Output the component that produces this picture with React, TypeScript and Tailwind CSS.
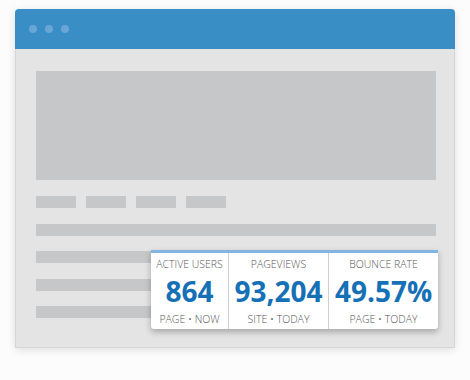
const stats = [
  { label: 'Active Users', value: '864', sub: 'Page • Now', w: 'w-[77px]' },
  { label: 'Pageviews', value: '93,204', sub: 'Site • Today', w: 'w-[100px]' },
  { label: 'Bounce Rate', value: '49.57%', sub: 'Page • Today', w: 'flex-1' },
];

export default function App() {
  return (
    <div className="w-[470px] h-[380px] bg-[#fcfcfc] pt-[9px] pl-[15px]" style={{ fontFamily: '"Open Sans", sans-serif' }}>
      <div className="relative w-[440px] rounded-[4px] shadow-[0_2px_8px_rgba(0,0,0,0.12)]">
        <div className="flex h-[40px] items-center gap-2 rounded-t-[4px] bg-[#3a8ec6] pl-[14px]">
          <span className="h-2 w-2 rounded-full bg-[#69a6d6]" />
          <span className="h-2 w-2 rounded-full bg-[#69a6d6]" />
          <span className="h-2 w-2 rounded-full bg-[#69a6d6]" />
        </div>
        <div className="flex h-[299px] flex-col border border-t-0 border-[#d6d6d6] bg-[#e4e4e4] pl-[20px] pr-[18px] pt-[22px]">
          <div className="h-[109px] bg-[#c6c7c9]" />
          <div className="mt-[16px] flex gap-[10px]">
            <div className="h-[12px] w-[40px] bg-[#c6c7c9]" />
            <div className="h-[12px] w-[40px] bg-[#c6c7c9]" />
            <div className="h-[12px] w-[40px] bg-[#c6c7c9]" />
            <div className="h-[12px] w-[40px] bg-[#c6c7c9]" />
          </div>
          <div className="mt-[16px] h-[12px] bg-[#c6c7c9]" />
          <div className="mt-[15px] h-[12px] bg-[#c6c7c9]" />
          <div className="mt-[16px] h-[12px] bg-[#c6c7c9]" />
          <div className="mt-[15px] h-[12px] bg-[#c6c7c9]" />
        </div>
        <div className="absolute left-[136px] top-[241px] flex h-[79px] w-[287px] rounded-b-[3px] border-t-[3px] border-[#82b6e0] bg-white shadow-[0_3px_6px_rgba(0,0,0,0.28)]">
          {stats.map((s, i) => (
            <div
              key={s.label}
              className={`${s.w} flex flex-col items-center ${i > 0 ? 'border-l border-[#cfcfcf]' : ''}`}
            >
              <div className="mt-[4px] text-[10.5px] leading-[14px] font-light uppercase text-[#555]">{s.label}</div>
              <div className="mt-[4px] text-[28px] leading-[32px] font-bold text-[#1570b6]">{s.value}</div>
              <div className="mt-[5px] text-[10.5px] leading-[14px] font-light uppercase text-[#555]">{s.sub}</div>
            </div>
          ))}
        </div>
      </div>
    </div>
  );
}
